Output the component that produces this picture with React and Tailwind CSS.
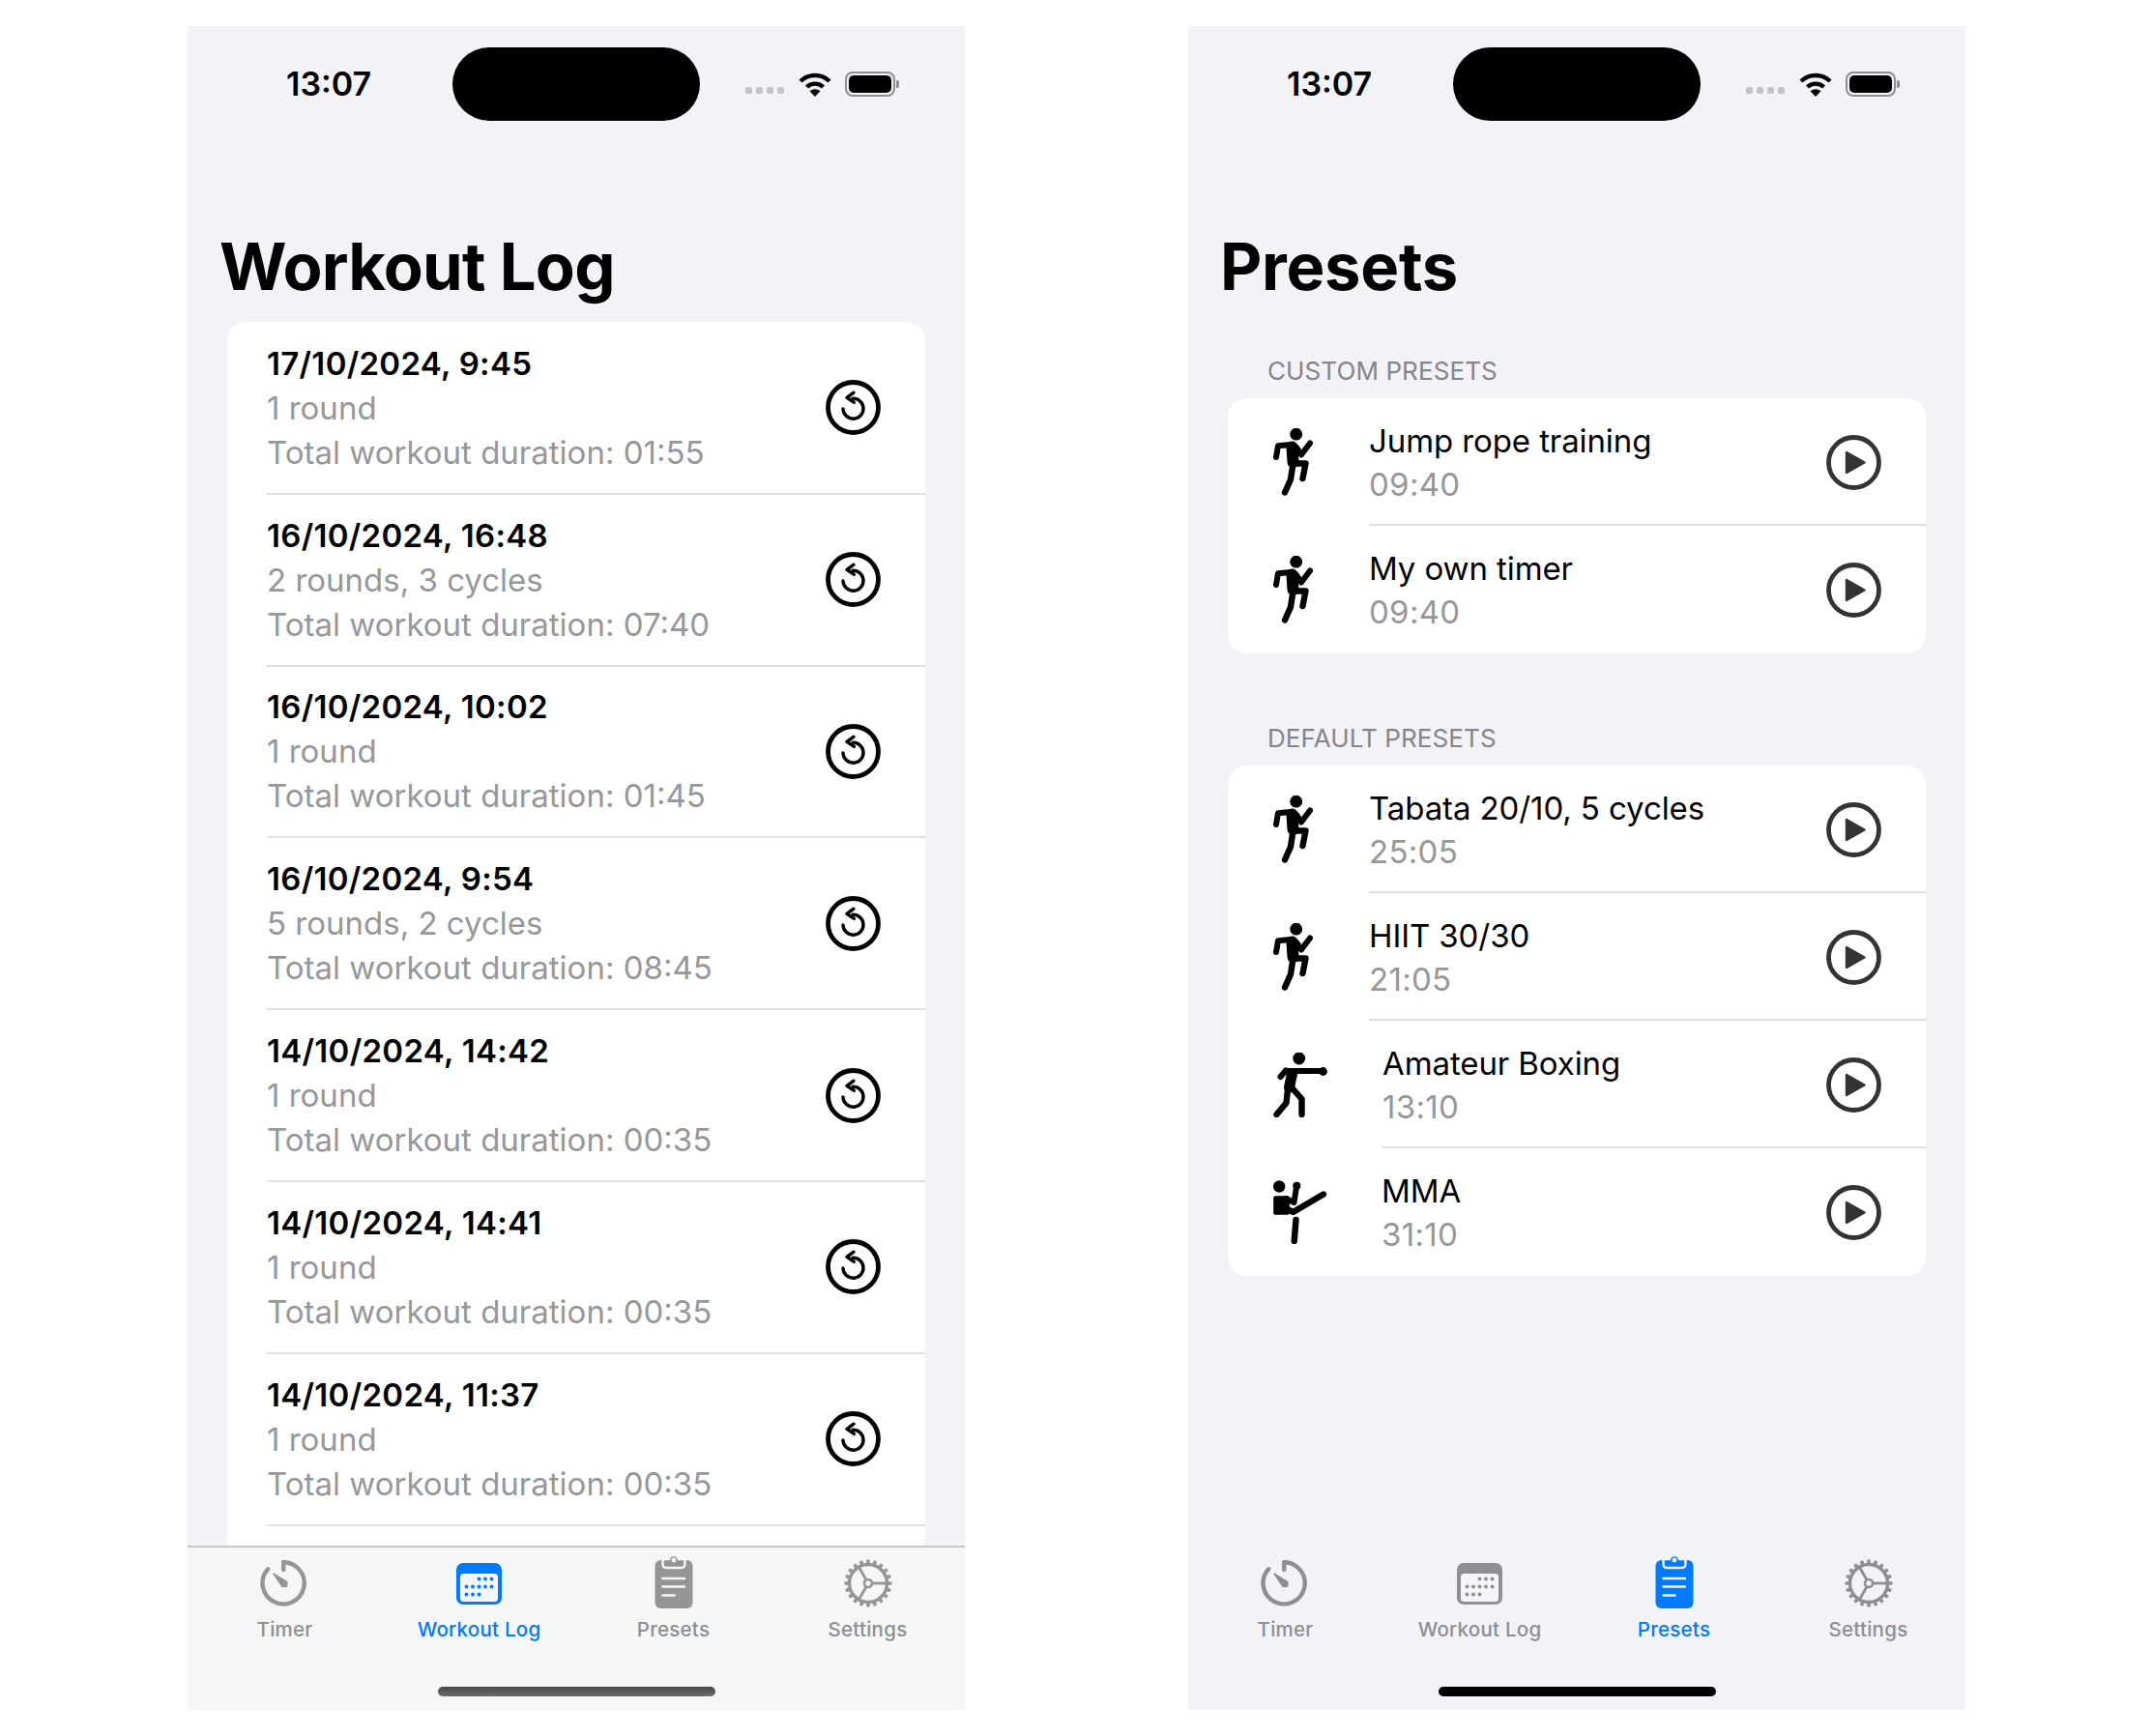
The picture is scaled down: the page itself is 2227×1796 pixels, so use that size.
const logs = [
  ['17/10/2024, 9:45', '1 round', '01:55'],
  ['16/10/2024, 16:48', '2 rounds, 3 cycles', '07:40'],
  ['16/10/2024, 10:02', '1 round', '01:45'],
  ['16/10/2024, 9:54', '5 rounds, 2 cycles', '08:45'],
  ['14/10/2024, 14:42', '1 round', '00:35'],
  ['14/10/2024, 14:41', '1 round', '00:35'],
  ['14/10/2024, 11:37', '1 round', '00:35'],
];

const Wifi = () => (
  <svg width="34" height="25" viewBox="0 0 34 25" fill="none" stroke="currentColor" strokeWidth="4.4">
    <path d="M2 9 C10 1 24 1 32 9" />
    <path d="M8.5 15 C13 10.5 21 10.5 25.5 15" />
    <path d="M17 25 L11.5 19.3 C14.5 16.5 19.5 16.5 22.5 19.3 Z" fill="currentColor" stroke="none" />
  </svg>
);

const Battery = () => (
  <div className="flex items-center">
    <div className="w-[52px] h-[26px] rounded-[8px] border-2 border-[#8f8f93] p-[2px]">
      <div className="w-full h-full rounded-[5px] bg-black" />
    </div>
    <div className="w-[3px] h-[8px] rounded-r-[2px] bg-[#8f8f93] ml-[1px]" />
  </div>
);

const StatusBar = () => (
  <div className="flex items-center pt-[22px] pl-[102px] shrink-0">
    <div className="w-[172px] text-[34px] leading-[76px] font-semibold text-black">13:07</div>
    <div className="w-[256px] h-[76px] rounded-full bg-black" />
    <div className="flex items-center ml-[47px]">
      <div className="flex gap-[4px] mt-[13px]">
        {[0, 1, 2, 3].map((i) => (
          <div key={i} className="w-[7px] h-[7px] rounded-[2px] bg-[#c4c4c8]" />
        ))}
      </div>
      <div className="ml-[15px] mr-[14px] text-black"><Wifi /></div>
      <Battery />
    </div>
  </div>
);

const RestartIcon = () => (
  <svg width="57" height="57" viewBox="0 0 57 57" fill="none" stroke="black" className="shrink-0">
    <circle cx="28.5" cy="28.5" r="26" strokeWidth="4.8" />
    <path d="M18 30 A10.5 10.5 0 1 0 28 19.2" strokeWidth="3.4" strokeLinecap="round" />
    <path d="M29 13.2 L22 18.4 L29.4 23.4" strokeWidth="3.4" strokeLinecap="round" strokeLinejoin="round" />
  </svg>
);

const PlayIcon = () => (
  <svg width="57" height="57" viewBox="0 0 57 57" className="shrink-0">
    <circle cx="28.5" cy="28.5" r="26" fill="none" stroke="#333335" strokeWidth="4.8" />
    <path d="M21 18 L39.5 28.5 L21 39 Z" fill="#333335" stroke="#333335" strokeWidth="2.4" strokeLinejoin="round" />
  </svg>
);

const Runner = () => (
  <svg width="42" height="70" viewBox="0 0 42 70" fill="none" stroke="black" strokeLinecap="round" strokeLinejoin="round">
    <circle cx="23.7" cy="6.2" r="6.4" fill="black" stroke="none" />
    <path d="M18 17 L5 18.3 L3 30" strokeWidth="6" />
    <path d="M19.5 19.5 L20.5 35" strokeWidth="12" />
    <path d="M24 20 L29 27.5 L38 15.5" strokeWidth="6" />
    <path d="M20 36.5 L33.5 36.5 L30.5 52" strokeWidth="6.4" />
    <path d="M20 40 L18 53 L12 66.5" strokeWidth="6.4" />
  </svg>
);

const Boxer = () => (
  <svg width="56" height="67" viewBox="0 0 56 67" fill="none" stroke="black" strokeLinecap="round" strokeLinejoin="round">
    <circle cx="26.7" cy="6" r="6.4" fill="black" stroke="none" />
    <path d="M13 19 L51 19" strokeWidth="6" />
    <circle cx="51.5" cy="19.5" r="4.4" fill="black" stroke="none" />
    <path d="M7.5 25 L13 18.5" strokeWidth="6" />
    <path d="M19.5 22 L16.5 36" strokeWidth="11" />
    <path d="M15 38 L13.5 52 L3.5 64" strokeWidth="6.4" />
    <path d="M18 35 L29.5 48 L29.5 64" strokeWidth="6.4" />
  </svg>
);

const Kicker = () => (
  <svg width="56" height="66" viewBox="0 0 56 66" fill="none" stroke="black" strokeLinecap="round" strokeLinejoin="round">
    <circle cx="6.2" cy="6.5" r="6.2" fill="black" stroke="none" />
    <circle cx="24.3" cy="5.7" r="4" fill="black" stroke="none" />
    <path d="M2 18 L15 18 L15 34 L2 34 Z" fill="black" stroke="black" strokeWidth="3.6" />
    <path d="M24 7 L21.5 23 L13 19" strokeWidth="6" />
    <path d="M8 26 L20.5 33 L52 14.5" strokeWidth="6.4" />
    <path d="M23.5 41 L21.7 63" strokeWidth="6.4" />
  </svg>
);

const TimerIcon = ({ color }) => (
  <svg width="48" height="48" viewBox="0 0 48 48" fill="none" stroke={color} className="mr-[3px]">
    <path d="M24.3 2.3 A21.6 21.6 0 1 1 8.2 9.3" strokeWidth="4.4" strokeLinecap="round" />
    <path d="M24.3 2.3 L24.3 10" strokeWidth="4.4" strokeLinecap="round" />
    <path d="M14 14 L28 22.5 L23 27.5 Z" fill={color} strokeWidth="1.4" strokeLinejoin="round" />
    <circle cx="25.5" cy="25" r="3.2" fill={color} stroke="none" />
  </svg>
);

const CalendarIcon = ({ color }) => {
  const dots = [
    [20, 17], [26.5, 17], [33, 17],
    [7, 25], [13.5, 25], [20, 25], [26.5, 25], [33, 25],
    [7, 33], [13.5, 33], [20, 33],
  ];
  return (
    <svg width="47" height="43" viewBox="0 0 47 43">
      <rect x="0" y="0" width="47" height="43" rx="7" fill={color} />
      <rect x="4" y="11" width="39" height="29" rx="3.5" fill="#f4f5f7" />
      {dots.map(([x, y]) => (
        <circle key={`${x}-${y}`} cx={x + 3.5} cy={y - 0.5} r="1.9" fill={color} />
      ))}
    </svg>
  );
};

const ClipboardIcon = ({ color, bg }) => (
  <svg width="40" height="57" viewBox="0 0 40 57" className="mb-[3px]">
    <rect x="0.5" y="6" width="39" height="50" rx="6" fill={color} />
    <path d="M8.5 7 Q8.5 5 11 5 L15 5 Q15.5 1 20 1 Q24.5 1 25 5 L29 5 Q31.5 5 31.5 7 L31.5 10 Q31.5 14 28 14 L12 14 Q8.5 14 8.5 10 Z" fill={color} stroke={bg} strokeWidth="2.4" />
    <circle cx="20" cy="6" r="2.4" fill={bg} />
    <path d="M8.5 25 H31 M8.5 33.5 H31 M8.5 42.5 H20.5" stroke={bg} strokeWidth="2.6" strokeLinecap="round" />
  </svg>
);

const GearIcon = ({ color }) => (
  <svg width="50" height="50" viewBox="0 0 50 50" fill="none" stroke={color}>
    <circle cx="25" cy="25" r="19.5" strokeWidth="3.4" />
    <circle cx="25" cy="25" r="4" strokeWidth="2.6" />
    {[0, 120, 240].map((a) => (
      <path key={a} d="M29 25 H44" strokeWidth="2.8" transform={`rotate(${a} 25 25)`} />
    ))}
    {Array.from({ length: 20 }, (_, i) => (
      <rect key={i} x="23.2" y="0.5" width="3.6" height="6" rx="1" fill={color} stroke="none" transform={`rotate(${i * 18} 25 25)`} />
    ))}
  </svg>
);

const TabBar = ({ active, bg, gray, barClass, lineClass, homeClass }) => {
  const tabs = [
    { label: 'Timer', icon: <TimerIcon color={gray} /> },
    { label: 'Workout Log', icon: <CalendarIcon color={active === 'Workout Log' ? '#007aff' : gray} /> },
    { label: 'Presets', icon: <ClipboardIcon color={active === 'Presets' ? '#007aff' : gray} bg={bg} /> },
    { label: 'Settings', icon: <GearIcon color={gray} /> },
  ];
  return (
    <div className={`h-[170px] shrink-0 flex flex-col border-t-2 ${barClass} ${lineClass}`}>
      <div className="grid grid-cols-4 pt-[7px]">
        {tabs.map((t) => (
          <div key={t.label} className="flex flex-col items-center">
            <div className="h-[60px] flex items-center justify-center">{t.icon}</div>
            <div className={`mt-[4px] text-[20.5px] leading-[28px] font-medium tracking-[0.25px] ${t.label === active ? 'text-[#007aff]' : 'text-[#8e8e93]'}`}>
              {t.label}
            </div>
          </div>
        ))}
      </div>
      <div className="flex justify-center mt-[45px]">
        <div className={`w-[287px] h-[10px] rounded-full ${homeClass}`} />
      </div>
    </div>
  );
};

const Title = ({ children, className }) => (
  <h1 className={`mt-[111px] pl-[33px] text-[67px] leading-[80px] font-bold text-black shrink-0 ${className}`}>
    {children}
  </h1>
);

const LogRow = ({ date, rounds, total }) => (
  <div className="ml-[41px] h-[177.8px] border-b-2 border-[#e0e0e2] flex items-center justify-between pr-[46px] shrink-0">
    <div className="text-[33px] leading-[46px]">
      <div className="font-semibold text-black tracking-[0.3px]">{date}</div>
      <div className="text-[#97979b]">{rounds}</div>
      <div className="text-[#97979b]">Total workout duration: {total}</div>
    </div>
    <RestartIcon />
  </div>
);

// rule and text start further right on the last two default presets, so the indent is passed in
const PresetRow = ({ icon, name, time, last, indent = '' }) => (
  <div className="h-[132px] flex">
    <div className="w-[146px] pl-[47px] flex items-center shrink-0">{icon}</div>
    <div className={`flex-1 flex items-center justify-between pt-[3px] pr-[46px] border-b-2 ${last ? 'border-transparent' : 'border-[#e0e0e2]'} ${indent}`}>
      <div className="text-[33px] leading-[45px] tracking-[-0.1px]">
        <div className="text-black">{name}</div>
        <div className="text-[#97979b] tracking-[0.3px]">{time}</div>
      </div>
      <PlayIcon />
    </div>
  </div>
);

const SectionLabel = ({ children, className }) => (
  <div className={`pl-[82px] text-[26px] leading-[32px] tracking-[0.1px] text-[#85858a] ${className}`}>{children}</div>
);

export default function App() {
  return (
    <div className="w-[2227px] h-[1796px] bg-white flex gap-[231px] pt-[27px] pl-[194px] [font-family:Inter,sans-serif] overflow-hidden">
      {/* Workout log screen */}
      <div className="w-[804px] h-[1742px] bg-[#f2f2f7] flex flex-col">
        <StatusBar />
        <Title className="tracking-[-0.8px]">Workout Log</Title>
        <div className="flex-1 min-h-0 mt-[17px] mx-[41px] pt-[1px] bg-white rounded-t-[20px] overflow-hidden flex flex-col">
          {logs.map(([date, rounds, total]) => (
            <LogRow key={date} date={date} rounds={rounds} total={total} />
          ))}
        </div>
        <TabBar
          active="Workout Log"
          bg="#f5f6f6"
          gray="#959595"
          barClass="bg-[#f5f6f6]"
          lineClass="border-[#c6c6c8]"
          homeClass="bg-gradient-to-b from-[#48484a] to-[#6c6c6e]"
        />
      </div>

      {/* Presets screen */}
      <div className="w-[804px] h-[1742px] bg-[#f2f2f7] flex flex-col">
        <StatusBar />
        <Title className="tracking-[-0.3px]">Presets</Title>
        <div className="flex-1 min-h-0">
          <SectionLabel className="mt-[52px]">CUSTOM PRESETS</SectionLabel>
          <div className="mt-[12px] mx-[41px] bg-white rounded-[20px] overflow-hidden">
            <PresetRow icon={<Runner />} name="Jump rope training" time="09:40" />
            <PresetRow last icon={<Runner />} name="My own timer" time="09:40" />
          </div>
          <SectionLabel className="mt-[72px]">DEFAULT PRESETS</SectionLabel>
          <div className="mt-[12px] mx-[41px] bg-white rounded-[20px] overflow-hidden">
            <PresetRow icon={<Runner />} name="Tabata 20/10, 5 cycles" time="25:05" />
            <PresetRow icon={<Runner />} name="HIIT 30/30" time="21:05" />
            <PresetRow indent="ml-[14px]" icon={<Boxer />} name="Amateur Boxing" time="13:10" />
            <PresetRow last indent="ml-[13px]" icon={<Kicker />} name="MMA" time="31:10" />
          </div>
        </div>
        <TabBar
          active="Presets"
          bg="#f2f2f7"
          gray="#8e8e93"
          barClass="bg-[#f2f2f7]"
          lineClass="border-transparent"
          homeClass="bg-black"
        />
      </div>
    </div>
  );
}
